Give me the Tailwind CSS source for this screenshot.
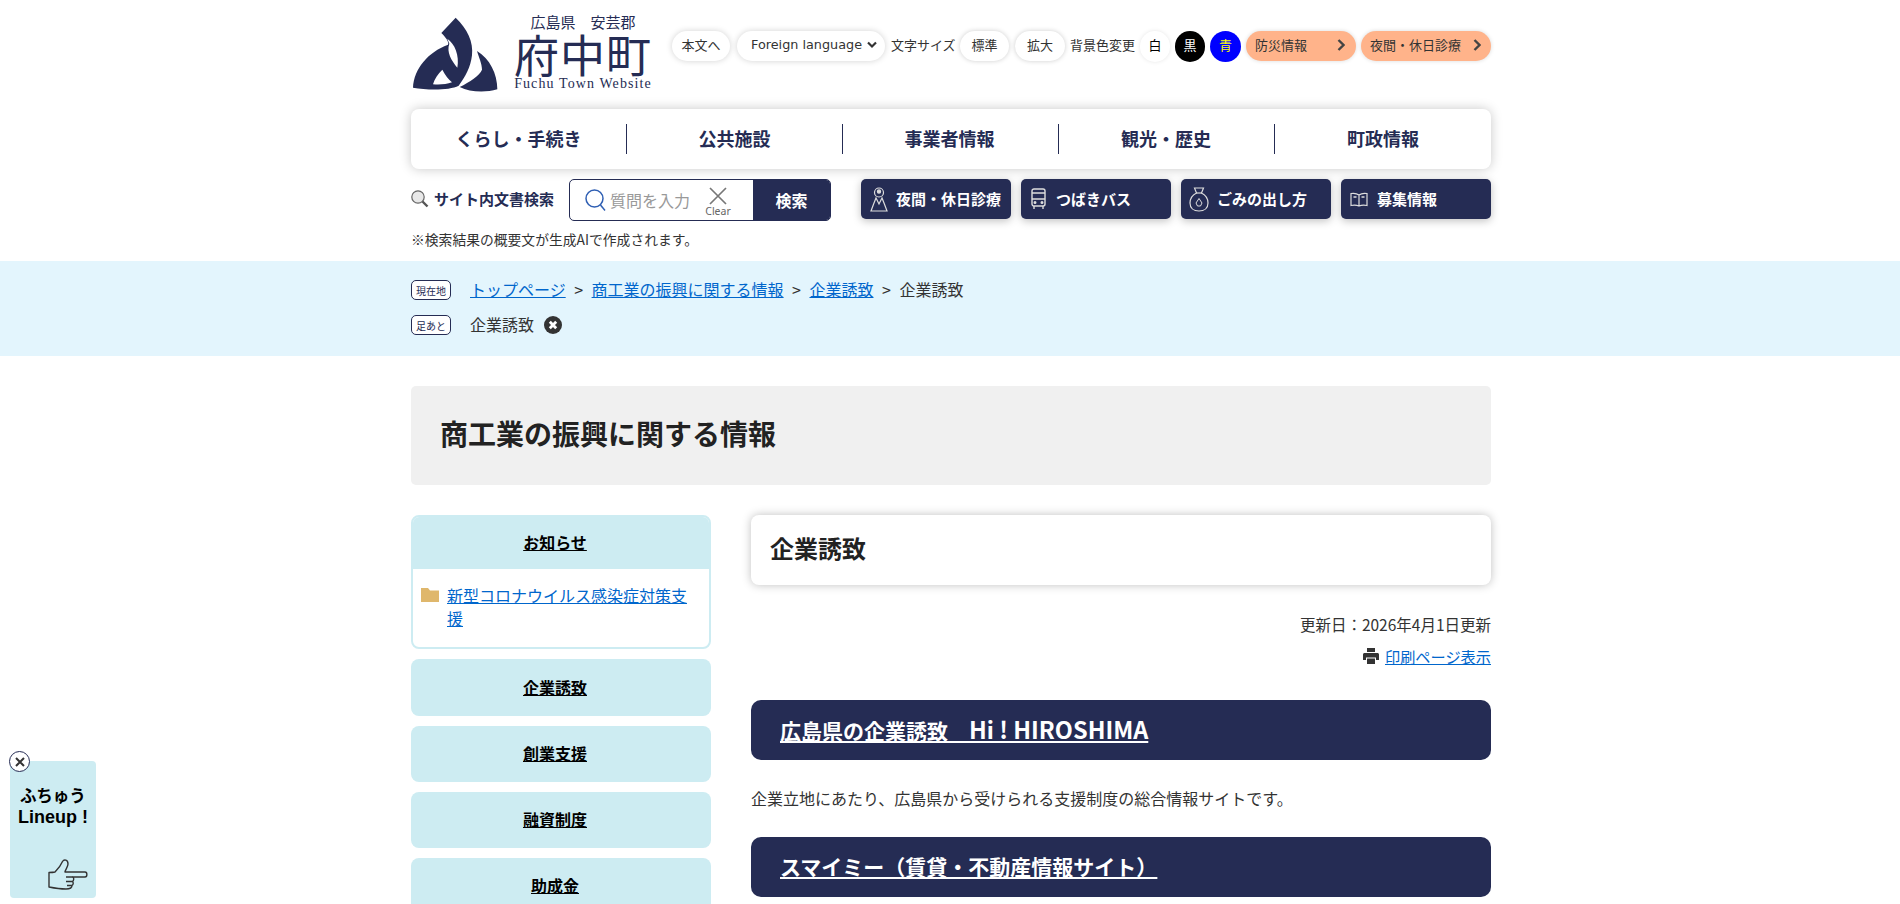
<!DOCTYPE html>
<html lang="ja">
<head>
  <meta charset="UTF-8">
  <meta name="viewport" content="width=device-width, initial-scale=1.0">
  <title>企業誘致 | 府中町</title>
  <script src="https://cdn.jsdelivr.net/npm/@tailwindcss/browser@4"></script>
</head>
<body class="bg-white text-[#333] overflow-hidden font-['Noto_Sans_CJK_JP','Noto_Sans',sans-serif]">

  <!-- Header -->
  <header class="w-[1080px] ml-[411px]">
    <div class="flex items-start h-[109px]">
      <a href="#" class="w-[261px] shrink-0 flex text-[#252c54]">
        <svg class="mt-[17px] ml-[1px] w-[86px] h-[79px]" viewBox="12 20 258 237" fill="#252c54">
          <path d="M143 22C178 55 197 95 192 135C188 170 172 200 152 226C125 240 60 240 15 232C18 175 60 125 120 103C125 95 110 78 100 68Z"/>
          <path d="M207 122C245 145 268 190 268 237C230 248 185 245 155 230C185 215 215 195 222 178C222 160 212 140 207 122Z"/>
          <path fill="#fff" d="M118 85C140 100 155 135 148 172C130 150 115 125 124 100Z"/>
          <path fill="#fff" d="M75 222C80 205 90 190 103 178C112 195 122 208 132 216C115 222 95 224 75 222Z"/>
        </svg>
        <div class="ml-[15px] w-[140px] flex flex-col items-center">
          <div class="mt-[12px] text-[15px] leading-[19px] whitespace-pre">広島県　安芸郡</div>
          <div class="text-[45px] leading-[46px] font-normal tracking-[1px] whitespace-nowrap">府中町</div>
          <div class="text-[14px] leading-[14px] tracking-[1.1px] whitespace-nowrap font-['Liberation_Serif',serif]">Fuchu Town Website</div>
        </div>
      </a>
      <div class="flex items-center mt-[31px] h-[30px] text-[13px] text-[#333] whitespace-nowrap">
        <a href="#" class="w-[58px] h-[30px] pb-[2px] flex items-center justify-center rounded-full bg-white shadow-[0_0_6px_rgba(0,0,0,0.18)]">本文へ</a>
        <a href="#" class="ml-[7px] w-[148px] h-[30px] pb-[2px] pl-[14px] flex items-center gap-[5px] rounded-full bg-white shadow-[0_0_6px_rgba(0,0,0,0.18)] font-['DejaVu_Sans',sans-serif] text-[12.8px]">
          Foreign language
          <svg class="w-[10px] h-[8px]" viewBox="0 0 10 8" fill="none" stroke="#333" stroke-width="2.2"><path d="M1 1.5L5 5.5L9 1.5"/></svg>
        </a>
        <span class="ml-[6px] w-[64px] pb-[2px]">文字サイズ</span>
        <a href="#" class="ml-[5px] w-[49px] h-[30px] pb-[2px] flex items-center justify-center rounded-full bg-white shadow-[0_0_5px_rgba(0,0,0,0.2)]">標準</a>
        <a href="#" class="ml-[6px] w-[50px] h-[30px] pb-[2px] flex items-center justify-center rounded-full bg-white shadow-[0_0_5px_rgba(0,0,0,0.2)]">拡大</a>
        <span class="ml-[5px] w-[65px] pb-[2px]">背景色変更</span>
        <a href="#" class="ml-[5px] w-[30px] h-[31px] pb-[2px] flex items-center justify-center rounded-full bg-white text-black shadow-[0_0_4px_rgba(0,0,0,0.1)]">白</a>
        <a href="#" class="ml-[5px] w-[30px] h-[31px] pb-[2px] flex items-center justify-center rounded-full bg-black text-white">黒</a>
        <a href="#" class="ml-[5px] w-[31px] h-[31px] pb-[2px] flex items-center justify-center rounded-full bg-[#0000ff] text-[#ffff00]">青</a>
        <a href="#" class="ml-[5px] w-[110px] h-[30px] pb-[2px] pl-[9px] pr-[11px] flex items-center justify-between rounded-full bg-[#ffb38a] shadow-[0_0_4px_rgba(0,0,0,0.15)]">
          防災情報
          <svg class="w-[8px] h-[12px]" viewBox="0 0 8 12" fill="none" stroke="#444" stroke-width="2.4"><path d="M1.5 1L6.5 6L1.5 11"/></svg>
        </a>
        <a href="#" class="ml-[5px] w-[130px] h-[30px] pb-[2px] pl-[9px] pr-[10px] flex items-center justify-between rounded-full bg-[#ffb38a] shadow-[0_0_4px_rgba(0,0,0,0.15)]">
          夜間・休日診療
          <svg class="w-[8px] h-[12px]" viewBox="0 0 8 12" fill="none" stroke="#444" stroke-width="2.4"><path d="M1.5 1L6.5 6L1.5 11"/></svg>
        </a>
      </div>
    </div>

    <!-- Global nav -->
    <nav class="h-[60px] flex items-center bg-white rounded-[8px] shadow-[0_0_12px_rgba(0,0,0,0.22)] text-[18px] font-bold text-[#252c54]">
      <a href="#" class="w-[216px] h-[30px] pb-[2px] flex items-center justify-center border-r border-[#252c54]">くらし・手続き</a>
      <a href="#" class="w-[216px] h-[30px] pb-[2px] flex items-center justify-center border-r border-[#252c54]">公共施設</a>
      <a href="#" class="w-[216px] h-[30px] pb-[2px] pr-[2px] flex items-center justify-center border-r border-[#252c54]">事業者情報</a>
      <a href="#" class="w-[216px] h-[30px] pb-[2px] pr-[1px] flex items-center justify-center border-r border-[#252c54]">観光・歴史</a>
      <a href="#" class="w-[216px] h-[30px] pb-[2px] flex items-center justify-center">町政情報</a>
    </nav>

    <!-- Search row -->
    <div class="flex items-start mt-[10px]">
      <div class="w-[158px] h-[40px] flex items-center text-[15px] font-bold text-[#252c54] whitespace-nowrap">
        <svg class="w-[18px] h-[18px] mr-[5px] shrink-0" viewBox="0 0 18 18" fill="none">
          <circle cx="7" cy="7" r="6.2" fill="#e8e8e8" stroke="#666" stroke-width="1.2"/>
          <path d="M11.5 11.5L16.5 16.5" stroke="#555" stroke-width="2.4"/>
        </svg>
        サイト内文書検索
      </div>
      <div class="w-[262px] h-[42px] flex border border-[#252c54] rounded-[5px] overflow-hidden bg-white">
        <div class="w-[183px] flex items-center pl-[15px] relative">
          <svg class="w-[21px] h-[23px] shrink-0" viewBox="0 0 21 23" fill="none" stroke="#2f5fb3" stroke-width="1.5">
            <circle cx="9.5" cy="9.5" r="8.5"/><path d="M15.5 16L20 21.5"/>
          </svg>
          <span class="ml-[4px] text-[16px] text-[#999] whitespace-nowrap">質問を入力</span>
          <div class="ml-[15px] mt-[3px] flex flex-col items-center w-[26px] text-[#666]">
            <svg class="w-[18px] h-[18px]" viewBox="0 0 18 18" fill="none" stroke="#777" stroke-width="1.7"><path d="M1 1L17 17M17 1L1 17"/></svg>
            <span class="text-[10.5px] leading-[12px] font-['Noto_Sans',sans-serif]">Clear</span>
          </div>
        </div>
        <button class="flex-1 bg-[#252c54] text-white text-[16px] font-bold">検索</button>
      </div>
      <div class="ml-[30px] flex gap-[10px] text-[15px] font-bold text-white whitespace-nowrap">
        <a href="#" class="w-[150px] h-[40px] pl-[9px] flex items-center gap-[8px] rounded-[5px] bg-[#252c54] shadow-[0_2px_8px_rgba(0,0,0,0.25)]">
          <svg class="w-[18px] h-[26px] shrink-0" viewBox="0 0 18 26" fill="none" stroke="#ddd" stroke-width="1.2">
            <circle cx="9" cy="6.5" r="4.5"/><circle cx="9" cy="5.5" r="1.6" fill="#ddd"/><path d="M6 12L4 17L1 25H17L14 17L12 12L9 18Z"/>
          </svg>
          夜間・休日診療
        </a>
        <a href="#" class="w-[150px] h-[40px] pl-[10px] flex items-center gap-[10px] rounded-[5px] bg-[#252c54] shadow-[0_2px_8px_rgba(0,0,0,0.25)]">
          <svg class="w-[15px] h-[22px] shrink-0" viewBox="0 0 15 22" fill="none" stroke="#ddd" stroke-width="1.4">
            <rect x="1" y="1" width="13" height="17" rx="2"/><path d="M1 11H14M1 5H14M3 18V21M12 18V21"/><circle cx="4" cy="14.5" r="0.8" fill="#ddd"/><circle cx="11" cy="14.5" r="0.8" fill="#ddd"/>
          </svg>
          つばきバス
        </a>
        <a href="#" class="w-[150px] h-[40px] pl-[8px] flex items-center gap-[8px] rounded-[5px] bg-[#252c54] shadow-[0_2px_8px_rgba(0,0,0,0.25)]">
          <svg class="w-[20px] h-[25px] shrink-0" viewBox="0 0 20 25" fill="none" stroke="#ddd" stroke-width="1.2">
            <path d="M5.5 1H14.5L12.5 6C16.5 8 19 12 19 16C19 21 15.5 24 10 24C4.5 24 1 21 1 16C1 12 3.5 8 7.5 6Z"/><path d="M7 6H13"/><path d="M10 11.5L13 16L11.5 19H8.5L7 16Z" stroke-width="1"/>
          </svg>
          ごみの出し方
        </a>
        <a href="#" class="w-[150px] h-[40px] pl-[9px] flex items-center gap-[9px] rounded-[5px] bg-[#252c54] shadow-[0_2px_8px_rgba(0,0,0,0.25)]">
          <svg class="w-[18px] h-[15px] shrink-0" viewBox="0 0 18 15" fill="none" stroke="#ddd" stroke-width="1.2">
            <path d="M9 3C7 1.5 4 1 1 1.5V13.5C4 13 7 13.2 9 14C11 13.2 14 13 17 13.5V1.5C14 1 11 1.5 9 3ZM9 3V14"/><path d="M3.5 5H6.5M11.5 5H14.5" stroke-width="1.6"/>
          </svg>
          募集情報
        </a>
      </div>
    </div>
    <p class="mt-[9px] text-[13.8px] leading-[19px] text-[#333]">※検索結果の概要文が生成AIで作成されます。</p>
  </header>

  <!-- Breadcrumb -->
  <div class="mt-[12px] h-[95px] bg-[#e3f5fd] pt-[19px] text-[16px]">
    <div class="w-[1080px] ml-[411px]">
      <div class="h-[20px] flex items-center">
        <span class="w-[40px] h-[20px] flex items-center justify-center rounded-[5px] border border-[#252c54] bg-white text-[10px] text-[#252c54]">現在地</span>
        <div class="ml-[19px] pb-[2px] flex items-center gap-[8.5px] whitespace-nowrap">
          <a href="#" class="text-[#0066cc] underline">トップページ</a><span>&gt;</span>
          <a href="#" class="text-[#0066cc] underline">商工業の振興に関する情報</a><span>&gt;</span>
          <a href="#" class="text-[#0066cc] underline">企業誘致</a><span>&gt;</span>
          <span>企業誘致</span>
        </div>
      </div>
      <div class="mt-[15px] h-[20px] flex items-center">
        <span class="w-[40px] h-[20px] flex items-center justify-center rounded-[5px] border border-[#252c54] bg-white text-[10px] text-[#252c54]">足あと</span>
        <span class="ml-[19px] pb-[2px]">企業誘致</span>
        <svg class="ml-[10px] w-[18px] h-[18px]" viewBox="0 0 18 18">
          <circle cx="9" cy="9" r="9" fill="#333"/><path d="M5.8 5.8L12.2 12.2M12.2 5.8L5.8 12.2" stroke="#fff" stroke-width="2.8"/>
        </svg>
      </div>
    </div>
  </div>

  <main class="w-[1080px] ml-[411px]">
    <div class="mt-[30px] h-[99px] pl-[29px] pb-[6px] flex items-center rounded-[5px] bg-[#f0f0f0] text-[28px] font-bold text-[#222]">商工業の振興に関する情報</div>

    <div class="mt-[30px] flex gap-[40px]">
      <!-- Side menu -->
      <aside class="w-[300px] shrink-0 flex flex-col gap-[10px] text-[16px] font-bold text-black">
        <div class="h-[134px] rounded-[8px] border-2 border-[#cdecf2] bg-white overflow-hidden">
          <a href="#" class="h-[52px] pr-[12px] pb-[2px] flex items-center justify-center bg-[#cdecf2] underline">お知らせ</a>
          <div class="flex pl-[8px] pr-[10px] pt-[15px] font-normal">
            <svg class="mt-[4px] w-[18px] h-[14px] shrink-0" viewBox="0 0 18 14" fill="#dfb76c"><path d="M0 0H7L9 2.5H18V14H0Z"/></svg>
            <a href="#" class="ml-[8px] leading-[23px] text-[#0066cc] underline">新型コロナウイルス感染症対策支援</a>
          </div>
        </div>
        <a href="#" class="h-[57px] pr-[12px] pb-[2px] flex items-center justify-center rounded-[8px] bg-[#cdecf2] underline">企業誘致</a>
        <a href="#" class="h-[56px] pr-[12px] pb-[2px] flex items-center justify-center rounded-[8px] bg-[#cdecf2] underline">創業支援</a>
        <a href="#" class="h-[56px] pr-[12px] pb-[2px] flex items-center justify-center rounded-[8px] bg-[#cdecf2] underline">融資制度</a>
        <a href="#" class="h-[56px] pr-[12px] pb-[2px] flex items-center justify-center rounded-[8px] bg-[#cdecf2] underline">助成金</a>
      </aside>

      <!-- Content -->
      <article class="flex-1 min-w-0">
        <h1 class="h-[70px] pl-[19px] pb-[4px] flex items-center rounded-[8px] bg-white shadow-[0_0_10px_rgba(0,0,0,0.25)] text-[24px] font-bold text-[#222]">企業誘致</h1>
        <p class="mt-[28px] text-right text-[15.5px] leading-[22px]">更新日：2026年4月1日更新</p>
        <p class="mt-[10px] flex items-center justify-end text-[15.2px] leading-[22px]">
          <svg class="w-[16px] h-[16px] mr-[6px]" viewBox="0 0 16 16" fill="#333"><path d="M4 0H12V4H4ZM1.5 5H14.5C15.3 5 16 5.7 16 6.5V12H13V9.5H3V12H0V6.5C0 5.7 .7 5 1.5 5ZM4 10.5H12V16H4Z"/></svg>
          <a href="#" class="text-[#0066cc] underline">印刷ページ表示</a>
        </p>
        <h2 class="mt-[33px] h-[60px] pl-[29px] flex items-center rounded-[10px] bg-[#252c54] text-[21px] font-bold text-white"><a href="#" class="underline">広島県の企業誘致　<span class="text-[23.5px]">Hi ! HIROSHIMA</span></a></h2>
        <p class="mt-[26px] text-[16px] leading-[24px]">企業立地にあたり、広島県から受けられる支援制度の総合情報サイトです。</p>
        <h2 class="mt-[27px] h-[60px] pl-[29px] flex items-center rounded-[10px] bg-[#252c54] text-[21px] font-bold text-white"><a href="#" class="underline">スマイミー（賃貸・不動産情報サイト）</a></h2>
      </article>
    </div>
  </main>

  <!-- Lineup widget -->
  <aside class="fixed left-[10px] top-[761px] w-[86px] h-[137px] rounded-[4px] bg-[#cdecf2] pt-[26px] text-center text-[16.6px] leading-[20px] font-bold text-black font-['Liberation_Sans','Noto_Sans_CJK_JP',sans-serif]">
    ふちゅう<br><span class="text-[18px]">Lineup !</span>
    <svg class="absolute left-[38px] top-[98px] w-[40px] h-[31px]" viewBox="0 0 40 31" fill="none" stroke="#333" stroke-width="1.4" stroke-linejoin="round">
      <path d="M1 13.5V28C6 29 12 30 18 30C21 30 24 29 24 26.5C25.5 25.5 25.5 23.5 24.5 22.5C26 21.5 26 19 25 18H37C39.5 18 39.5 13 37 13H17C17 11 20 8 20 5C20 0.5 16 0 14.5 2.5C13 6 10 10 7 13C5 13.5 3 13.5 1 13.5Z"/>
      <path d="M18 18H25M18 22.5H24.5M19 26.5H24"/>
    </svg>
  </aside>
  <button class="fixed left-[9px] top-[751px] w-[21px] h-[21px] flex items-center justify-center rounded-full bg-white border border-[#252c54]">
    <svg class="w-[10px] h-[10px]" viewBox="0 0 10 10" stroke="#333" stroke-width="2"><path d="M1 1L9 9M9 1L1 9"/></svg>
  </button>
</body>
</html>
